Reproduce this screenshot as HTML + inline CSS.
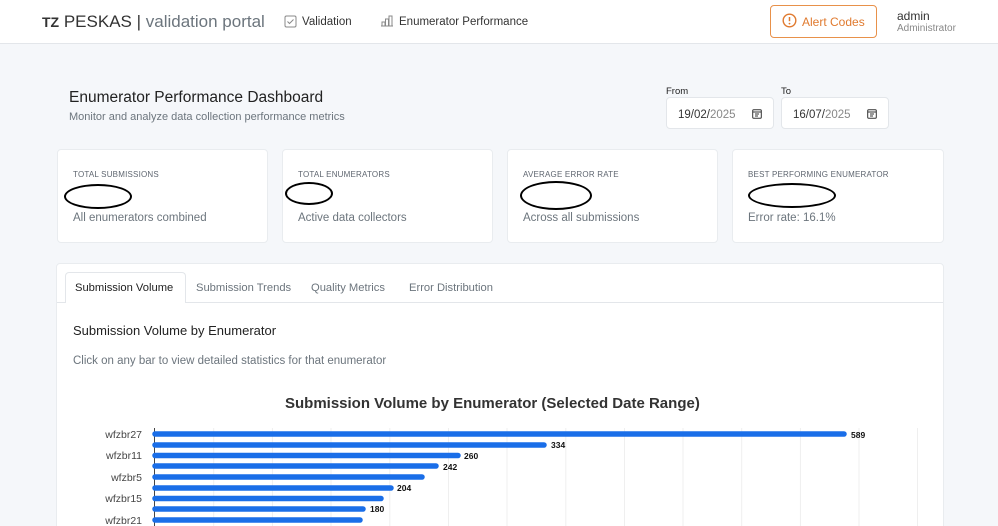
<!DOCTYPE html>
<html><head><meta charset="utf-8"><style>
*{box-sizing:border-box;margin:0;padding:0}
html,body{width:998px;height:526px;overflow:hidden}
body{background:#f5f7fa;font-family:"Liberation Sans",sans-serif;color:#212529;position:relative}
.nav{position:absolute;left:0;top:0;width:998px;height:44px;background:#fff;border-bottom:1px solid #e3e6ea}
.abs{position:absolute;white-space:nowrap}
.card{position:absolute;background:#fff;border:1px solid #e9ecef;border-radius:4px}
.lbl{font-size:8px;color:#5f6670;letter-spacing:.2px}
.sub{font-size:11.5px;color:#6c757d}
.oval{position:absolute;border:2.5px solid #000;border-radius:50%}
.date{position:absolute;top:97px;height:32px;background:#fff;border:1px solid #e3e6ea;border-radius:4px;font-size:11.5px;color:#333;padding:11px 0 0 11px}
.date span{color:#888}
.tab{position:absolute;top:282px;font-size:11.2px;color:#6c757d}
</style></head><body>
<div class="nav"></div>
<div class="abs" style="left:42px;top:12px;font-size:17px;color:#333"><b style="font-size:14px">TZ</b> PESKAS | <span style="color:#6c757d">validation portal</span></div>
<svg class="abs" style="left:284px;top:15px" width="13" height="13" viewBox="0 0 13 13"><rect x="1" y="1" width="11" height="11" rx="1.5" fill="none" stroke="#888" stroke-width="1"/><path d="M3.5 6.5l2 2 4-4" fill="none" stroke="#888"/></svg>
<div class="abs" style="left:302px;top:16px;font-size:11.5px;color:#333">Validation</div>
<svg class="abs" style="left:380px;top:15px" width="14" height="12" viewBox="0 0 14 12"><path d="M1 11h12M2 11V7h3v4M5.5 11V4h3v7M9 11V1h3v10" fill="none" stroke="#888"/></svg>
<div class="abs" style="left:399px;top:16px;font-size:11.5px;color:#333">Enumerator Performance</div>
<div class="abs" style="left:770px;top:5px;width:107px;height:33px;border:1px solid #e8914a;border-radius:4px"></div>
<svg class="abs" style="left:782px;top:13px" width="15" height="15" viewBox="0 0 15 15"><circle cx="7.5" cy="7.5" r="6.3" fill="none" stroke="#e07a2f" stroke-width="1.4"/><path d="M7.5 4v4.2" stroke="#e07a2f" stroke-width="1.5"/><circle cx="7.5" cy="10.6" r=".9" fill="#e07a2f"/></svg>
<div class="abs" style="left:802px;top:15px;font-size:12px;color:#e07a2f">Alert Codes</div>
<div class="abs" style="left:897px;top:9px;font-size:12px;color:#333">admin</div>
<div class="abs" style="left:897px;top:23px;font-size:10px;color:#888">Administrator</div>

<div class="abs" style="left:69px;top:89px;font-size:15.5px;color:#222">Enumerator Performance Dashboard</div>
<div class="abs" style="left:69px;top:111px;font-size:11px;color:#6c757d">Monitor and analyze data collection performance metrics</div>
<div class="abs" style="left:666px;top:86px;font-size:9.5px;color:#222">From</div>
<div class="abs" style="left:781px;top:86px;font-size:9.5px;color:#222">To</div>
<div class="date" style="left:666px;width:108px">19/02/<span>2025</span></div>
<div class="date" style="left:781px;width:108px">16/07/<span>2025</span></div>
<svg class="abs" style="left:752px;top:109px" width="10" height="10" viewBox="0 0 10 10"><rect x=".7" y=".7" width="8.6" height="8.6" rx="1" fill="none" stroke="#333"/><path d="M1 3h8M3 5h4M3 7h3" stroke="#333"/></svg>
<svg class="abs" style="left:867px;top:109px" width="10" height="10" viewBox="0 0 10 10"><rect x=".7" y=".7" width="8.6" height="8.6" rx="1" fill="none" stroke="#333"/><path d="M1 3h8M3 5h4M3 7h3" stroke="#333"/></svg>

<div class="card" style="left:57px;top:149px;width:211px;height:94px"></div>
<div class="card" style="left:282px;top:149px;width:211px;height:94px"></div>
<div class="card" style="left:507px;top:149px;width:211px;height:94px"></div>
<div class="card" style="left:732px;top:149px;width:212px;height:94px"></div>
<div class="abs lbl" style="left:73px;top:170px">TOTAL SUBMISSIONS</div>
<div class="abs lbl" style="left:298px;top:170px">TOTAL ENUMERATORS</div>
<div class="abs lbl" style="left:523px;top:170px">AVERAGE ERROR RATE</div>
<div class="abs lbl" style="left:748px;top:170px">BEST PERFORMING ENUMERATOR</div>
<div class="oval" style="left:64px;top:184px;width:68px;height:25px"></div>
<div class="oval" style="left:285px;top:182px;width:48px;height:23px"></div>
<div class="oval" style="left:520px;top:181px;width:72px;height:29px"></div>
<div class="oval" style="left:748px;top:183px;width:88px;height:25px"></div>
<div class="abs sub" style="left:73px;top:212px">All enumerators combined</div>
<div class="abs sub" style="left:298px;top:212px">Active data collectors</div>
<div class="abs sub" style="left:523px;top:212px">Across all submissions</div>
<div class="abs sub" style="left:748px;top:212px">Error rate: 16.1%</div>

<div class="card" style="left:56px;top:263px;width:888px;height:280px"></div>
<div class="abs" style="left:57px;top:302px;width:886px;border-top:1px solid #e3e6ea"></div>
<div class="abs" style="left:65px;top:272px;width:121px;height:31px;background:#fff;border:1px solid #e3e6ea;border-bottom:none;border-radius:4px 4px 0 0"></div>
<div class="tab" style="left:75px;color:#222">Submission Volume</div>
<div class="tab" style="left:196px">Submission Trends</div>
<div class="tab" style="left:311px">Quality Metrics</div>
<div class="tab" style="left:409px">Error Distribution</div>
<div class="abs" style="left:73px;top:323px;font-size:13px;color:#222">Submission Volume by Enumerator</div>
<div class="abs" style="left:73px;top:355px;font-size:11.5px;color:#6c757d">Click on any bar to view detailed statistics for that enumerator</div>
<div class="abs" style="left:285px;top:395px;font-size:15px;font-weight:bold;color:#333">Submission Volume by Enumerator (Selected Date Range)</div>

<svg class="abs" style="left:0;top:420px" width="998" height="106">
<g stroke="#efefef" stroke-width="1">
<line x1="213.7" y1="8" x2="213.7" y2="106"/><line x1="272.4" y1="8" x2="272.4" y2="106"/><line x1="331" y1="8" x2="331" y2="106"/><line x1="389.8" y1="8" x2="389.8" y2="106"/><line x1="448.5" y1="8" x2="448.5" y2="106"/><line x1="507" y1="8" x2="507" y2="106"/><line x1="565.8" y1="8" x2="565.8" y2="106"/><line x1="624.5" y1="8" x2="624.5" y2="106"/><line x1="683" y1="8" x2="683" y2="106"/><line x1="741.7" y1="8" x2="741.7" y2="106"/><line x1="800.4" y1="8" x2="800.4" y2="106"/><line x1="859" y1="8" x2="859" y2="106"/><line x1="917.5" y1="8" x2="917.5" y2="106"/>
</g>
<line x1="154.5" y1="8" x2="154.5" y2="106" stroke="#444"/>
<g stroke="#1a6ee8" stroke-width="5.5" stroke-linecap="round">
<line x1="155" y1="14" x2="844" y2="14"/><line x1="155" y1="25" x2="544" y2="25"/><line x1="155" y1="35.5" x2="458" y2="35.5"/><line x1="155" y1="46" x2="436" y2="46"/><line x1="155" y1="57" x2="422" y2="57"/><line x1="155" y1="68" x2="391" y2="68"/><line x1="155" y1="78.5" x2="381" y2="78.5"/><line x1="155" y1="89" x2="363" y2="89"/><line x1="155" y1="100" x2="360" y2="100"/>
</g>
<g font-size="8.5" font-weight="bold" fill="#111" font-family="Liberation Sans,sans-serif">
<text x="851" y="18">589</text><text x="551" y="28">334</text><text x="464" y="39">260</text><text x="443" y="50">242</text><text x="397" y="71">204</text><text x="370" y="92">180</text>
</g>
<g font-size="10.5" fill="#444" font-family="Liberation Sans,sans-serif" text-anchor="end">
<text x="142" y="18">wfzbr27</text><text x="142" y="39">wfzbr11</text><text x="142" y="61">wfzbr5</text><text x="142" y="82">wfzbr15</text><text x="142" y="104">wfzbr21</text>
</g>
</svg>
</body></html>
